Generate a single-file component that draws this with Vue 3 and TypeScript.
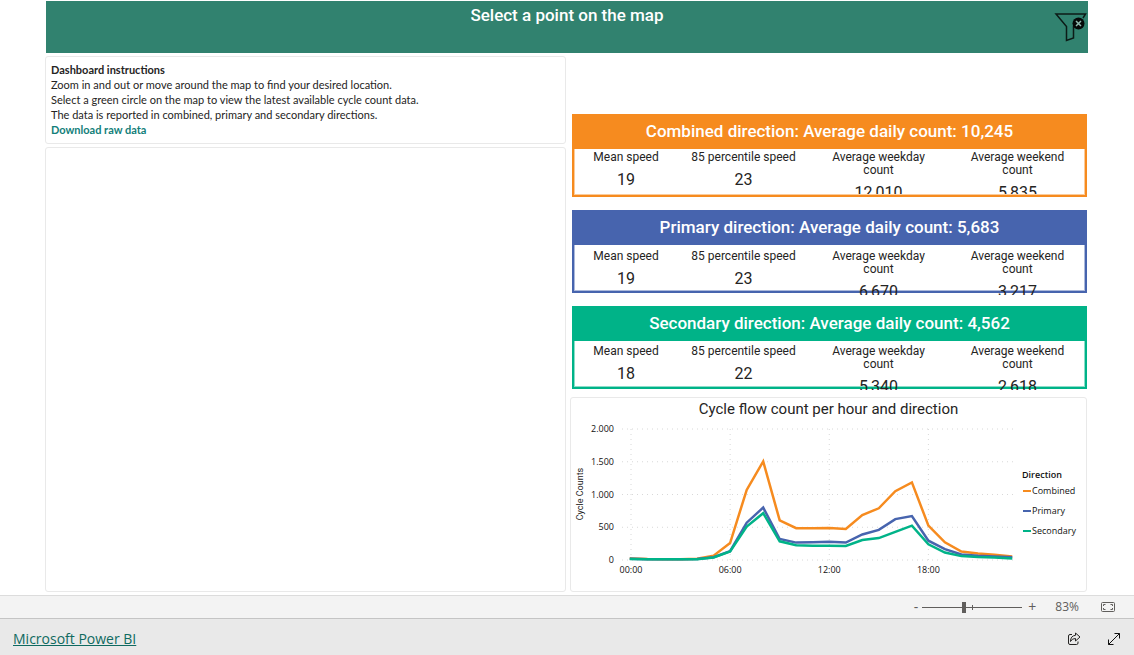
<script setup lang="ts">
import { ref } from 'vue'

interface Metric {
  label: string
  value: string
}

interface DirectionCard {
  key: string
  title: string
  metrics: Metric[]
}

interface Series {
  key: string
  name: string
  values: number[]
}

const cards: DirectionCard[] = [
  {
    key: 'combined',
    title: 'Combined direction: Average daily count: 10,245',
    metrics: [
      { label: 'Mean speed', value: '19' },
      { label: '85 percentile speed', value: '23' },
      { label: 'Average weekday count', value: '12,010' },
      { label: 'Average weekend count', value: '5,835' },
    ],
  },
  {
    key: 'primary',
    title: 'Primary direction: Average daily count: 5,683',
    metrics: [
      { label: 'Mean speed', value: '19' },
      { label: '85 percentile speed', value: '23' },
      { label: 'Average weekday count', value: '6,670' },
      { label: 'Average weekend count', value: '3,217' },
    ],
  },
  {
    key: 'secondary',
    title: 'Secondary direction: Average daily count: 4,562',
    metrics: [
      { label: 'Mean speed', value: '18' },
      { label: '85 percentile speed', value: '22' },
      { label: 'Average weekday count', value: '5,340' },
      { label: 'Average weekend count', value: '2,618' },
    ],
  },
]

const series: Series[] = [
  {
    key: 'combined',
    name: 'Combined',
    values: [25, 15, 12, 12, 18, 65, 260, 1070, 1505, 605, 485, 485, 490, 475, 685, 790, 1050, 1185, 525, 270, 130, 100, 80, 55],
  },
  {
    key: 'primary',
    name: 'Primary',
    values: [20, 12, 10, 10, 15, 42, 135, 570, 800, 320, 265, 272, 278, 265, 390, 460, 625, 670, 295, 165, 85, 65, 55, 45],
  },
  {
    key: 'secondary',
    name: 'Secondary',
    values: [15, 10, 10, 10, 12, 38, 130, 510, 715, 285, 225, 218, 218, 215, 305, 335, 430, 525, 240, 115, 60, 45, 40, 25],
  },
]

const plot = { left: 60, right: 440, top: 9, bottom: 140, max: 2000 }

const xAt = (hour: number): number => plot.left + (hour * (plot.right - plot.left)) / 23
const yAt = (count: number): number => plot.bottom - (count * (plot.bottom - plot.top)) / plot.max

const pointsOf = (values: number[]): string =>
  values.map((v, hour) => `${xAt(hour).toFixed(1)},${yAt(v).toFixed(1)}`).join(' ')

const yTicks = [
  { value: 2000, label: '2.000' },
  { value: 1500, label: '1.500' },
  { value: 1000, label: '1.000' },
  { value: 500, label: '500' },
  { value: 0, label: '0' },
]
const xTicks = [
  { hour: 0, label: '00:00' },
  { hour: 6, label: '06:00' },
  { hour: 12, label: '12:00' },
  { hour: 18, label: '18:00' },
]

const zoom = ref(83)
const slider = ref(41)
</script>

<template>
  <div class="page">
    <main class="report">
      <header class="banner">
        <h1>Select a point on the map</h1>
        <button class="clear-filter" type="button" aria-label="Clear filters">
          <svg width="34" height="32" viewBox="0 0 34 32" fill="none">
            <path d="M29 8 L31.500 4 H2 L12.500 16.500 V30.500 L19.500 28 V16.500 L20.500 15" stroke="#0c1b17" stroke-width="1.500" />
            <circle cx="24.500" cy="13.500" r="6" fill="#050908" />
            <path d="M22 11 L27 16 M27 11 L22 16" stroke="#8fb9ae" stroke-width="1.500" />
          </svg>
        </button>
      </header>

      <div class="columns">
        <div class="left">
          <section class="panel instructions">
            <h2>Dashboard instructions</h2>
            <p>Zoom in and out or move around the map to find your desired location.</p>
            <p>Select a green circle on the map to view the latest available cycle count data.</p>
            <p>The data is reported in combined, primary and secondary directions.</p>
            <a href="#">Download raw data</a>
          </section>
          <section class="panel map" aria-label="Map"></section>
        </div>

        <div class="right">
          <section v-for="card in cards" :key="card.key" class="card" :class="card.key">
            <h2>{{ card.title }}</h2>
            <dl>
              <div v-for="m in card.metrics" :key="m.label">
                <dt>{{ m.label }}</dt>
                <dd>{{ m.value }}</dd>
              </div>
            </dl>
          </section>

          <section class="panel chart">
            <h2>Cycle flow count per hour and direction</h2>
            <svg viewBox="0 0 515 170" role="img" aria-label="Cycle flow count per hour and direction">
              <g class="grid">
                <line v-for="t in yTicks" :key="t.value" x1="51" x2="446" :y1="yAt(t.value)" :y2="yAt(t.value)" />
                <line v-for="t in xTicks" :key="t.label" :x1="xAt(t.hour)" :x2="xAt(t.hour)" y1="9" y2="140" />
              </g>
              <g class="axis">
                <text v-for="t in yTicks" :key="t.value" x="43" :y="yAt(t.value) + 3" text-anchor="end">{{ t.label }}</text>
                <text v-for="t in xTicks" :key="t.label" :x="xAt(t.hour)" y="153" text-anchor="middle">{{ t.label }}</text>
              </g>
              <text class="axis-title" transform="translate(12 74) rotate(-90)" text-anchor="middle">Cycle Counts</text>
              <polyline v-for="s in series" :key="s.key" class="series" :class="s.key" :points="pointsOf(s.values)" />
              <g class="legend">
                <text class="legend-title" x="451" y="58">Direction</text>
                <g v-for="(s, i) in series" :key="s.key">
                  <line :class="s.key" x1="452" x2="460" :y1="71 + i * 20" :y2="71 + i * 20" />
                  <text x="461" :y="74 + i * 20">{{ s.name }}</text>
                </g>
              </g>
            </svg>
          </section>
        </div>
      </div>
    </main>

    <div class="zoombar">
      <button type="button" aria-label="Zoom out">-</button>
      <input v-model.number="slider" type="range" min="0" max="100" aria-label="Zoom" />
      <button type="button" aria-label="Zoom in">+</button>
      <output>{{ zoom }}%</output>
      <button class="fit" type="button" aria-label="Fit to page">
        <svg width="14" height="12" viewBox="0 0 14 12" fill="none" stroke="#605e5c">
          <rect x="0.500" y="1.500" width="13" height="9" rx="1" />
          <path d="M2.500 5 V3.500 H4.500 M9.500 3.500 H11.500 V5 M11.500 7 V8.500 H9.500 M4.500 8.500 H2.500 V7" />
        </svg>
      </button>
    </div>

    <footer class="footer">
      <a href="#">Microsoft Power BI</a>
      <button type="button" aria-label="Share">
        <svg width="14" height="14" viewBox="0 0 14 14" fill="none" stroke="#252423" stroke-linejoin="round">
          <path d="M5 2.500 H3 Q1.500 2.500 1.500 4 V11 Q1.500 12.500 3 12.500 H9.500 Q11 12.500 11 11 V9.500" />
          <path d="M8.500 1 L13 5 L8.500 9 V6.500 Q5 6.300 3.500 9.500 Q3.500 3.800 8.500 3.300 Z" />
        </svg>
      </button>
      <button type="button" aria-label="Full screen">
        <svg width="14" height="14" viewBox="0 0 14 14" fill="none" stroke="#111">
          <path d="M1.500 12.500 L12.500 1.500 M7.500 1.500 H12.500 V6.500 M1.500 7.500 V12.500 H6.500" />
        </svg>
      </button>
    </footer>
  </div>
</template>

<style>
body {
  margin: 0;
  background: #fff;
}
</style>

<style scoped>
.page {
  --combined: #f68b1f;
  --primary: #4764ae;
  --secondary: #00b388;
  display: flex;
  flex-direction: column;
  min-height: 100vh;
  font-family: 'Open Sans', 'Noto Sans', sans-serif;
  color: #252423;
}

h1,
h2,
p,
dl,
dd {
  margin: 0;
}

button {
  padding: 0;
  border: 0;
  background: none;
  color: inherit;
  font: inherit;
  cursor: pointer;
}

svg {
  display: block;
}

.report {
  flex: 1;
  display: flex;
  flex-direction: column;
  padding: 1px 46px 3px;
}

.banner {
  display: grid;
  height: 52px;
  background: #31826f;
}

.banner > * {
  grid-area: 1 / 1;
}

.banner h1 {
  color: #fff;
  font: 500 17px/28px Roboto, sans-serif;
  text-align: center;
}

.clear-filter {
  justify-self: end;
  align-self: start;
  padding-top: 9px;
}

.columns {
  flex: 1;
  display: grid;
  grid-template-columns: 521fr 517fr;
  gap: 4px;
  margin: 3px 1px 0 -1px;
}

.left,
.right {
  display: flex;
  flex-direction: column;
  min-width: 0;
}

.left {
  gap: 3px;
}

.panel {
  border: 1px solid #e9e9e9;
  border-radius: 3px;
}

.instructions {
  padding: 5px 5px 6px;
  font: 11px/15px Lato, sans-serif;
}

.instructions h2 {
  font: inherit;
  font-weight: 700;
}

.instructions a {
  color: #12807a;
  font-weight: 700;
  text-decoration: none;
}

.map {
  flex: 1;
}

.right {
  padding-top: 58px;
}

.card {
  box-sizing: border-box;
  height: 83px;
  margin: 0 0 13px 2px;
  border: 2px solid var(--tone);
  box-shadow: inset 0 0 0 1px color-mix(in srgb, var(--tone) 45%, white);
  font-family: Roboto, sans-serif;
}

.card.combined {
  --tone: var(--combined);
  --clip: 45px;
  --inset: 2px;
}

.card.primary {
  --tone: var(--primary);
  --clip: 50px;
  --inset: 5px;
}

.card.secondary {
  --tone: var(--secondary);
  --clip: 49px;
  --inset: 4px;
  margin-bottom: 8px;
}

.card h2 {
  margin: -2px -2px 0;
  background: var(--tone);
  color: #fff;
  font-size: 17px;
  font-weight: 500;
  line-height: 35px;
  text-align: center;
}

.card dl {
  box-sizing: border-box;
  display: grid;
  grid-template-columns: 104fr 131fr 139fr 139fr;
  height: var(--clip);
  margin: 0 -2px 0 0;
  padding-top: var(--inset);
  overflow: hidden;
  text-align: center;
}

.card dt {
  padding: 0 20px;
  font-size: 12px;
  line-height: 13px;
}

.card dl > :nth-child(-n + 2) dt {
  padding: 0;
}

.card dd {
  margin-top: 6px;
  font-size: 16px;
  line-height: 20px;
}

.chart {
  flex: 1;
}

.chart h2 {
  font: 400 15px/22px Roboto, sans-serif;
  text-align: center;
}

.chart svg {
  width: 100%;
  height: auto;
}

.grid line {
  stroke: #d8d8d8;
  stroke-width: 1;
  stroke-dasharray: 1 4;
}

.axis text,
.legend text {
  fill: #111;
  font-size: 9px;
}

.legend .legend-title {
  font-weight: 600;
}

.axis-title {
  fill: #252423;
  font: 9px Roboto, sans-serif;
}

.series {
  fill: none;
  stroke-width: 2.5;
  stroke-linejoin: miter;
  stroke-linecap: square;
}

.legend line {
  stroke-width: 2;
}

polyline.combined,
line.combined {
  stroke: var(--combined);
}

polyline.primary,
line.primary {
  stroke: var(--primary);
}

polyline.secondary,
line.secondary {
  stroke: var(--secondary);
}

.zoombar {
  display: flex;
  align-items: center;
  justify-content: flex-end;
  height: 22px;
  padding-right: 19px;
  border-top: 1px solid #dcdcdc;
  border-bottom: 1px solid #c4c4c4;
  background: #f3f3f3;
  color: #605e5c;
  font-size: 12px;
  line-height: 22px;
}

.zoombar button {
  font-size: 14px;
}

.zoombar input {
  appearance: none;
  width: 100px;
  height: 11px;
  margin: 0 6px 0 4px;
  background:
    linear-gradient(#605e5c, #605e5c) 50px 50% / 1px 5px no-repeat,
    linear-gradient(#605e5c, #605e5c) 0 50% / 100% 1px no-repeat;
}

.zoombar input::-webkit-slider-thumb {
  appearance: none;
  width: 4px;
  height: 11px;
  background: #605e5c;
}

.zoombar output {
  margin: 0 22px 0 19px;
}

.footer {
  display: flex;
  align-items: center;
  gap: 26px;
  height: 36px;
  padding: 0 13px;
  background: #e9e9e9;
}

.footer a {
  margin-right: auto;
  color: #0f6a60;
  font-size: 14px;
  line-height: 20px;
  margin-top: 4px;
}

.footer button {
  margin-top: 3px;
}
</style>
